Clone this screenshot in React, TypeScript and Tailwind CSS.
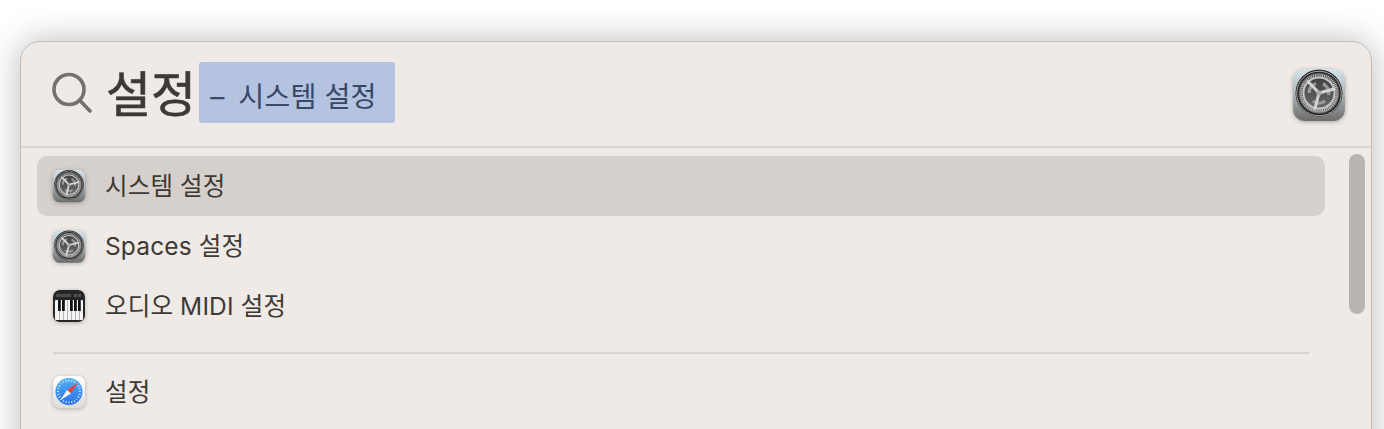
const FONT = 'font-["Inter","Noto_Sans_CJK_KR",sans-serif]'

function GearIcon({ size, className = '' }: { size: number; className?: string }) {
  const ticks = Array.from({ length: 60 }, (_, i) => i * 6)
  return (
    <svg width={size} height={size} viewBox="0 0 54 54" className={className}>
      <defs>
        <linearGradient id={`gear-bg-${size}`} x1="0" y1="0" x2="0" y2="1">
          <stop offset="0" stopColor="#d6e5eb" />
          <stop offset="0.5" stopColor="#aab2b5" />
          <stop offset="1" stopColor="#6c6c6c" />
        </linearGradient>
        <linearGradient id={`gear-in-${size}`} x1="0" y1="0" x2="0" y2="1">
          <stop offset="0" stopColor="#3a3a3a" />
          <stop offset="1" stopColor="#707070" />
        </linearGradient>
      </defs>
      <rect x="1" y="1" width="52" height="52" rx="12" fill={`url(#gear-bg-${size})`} />
      <circle cx="27" cy="25" r="23.5" fill="#262626" />
      <circle cx="27" cy="25.5" r="22.3" fill="none" stroke="#b5b5b5" strokeWidth="0.9" />
      <circle cx="27" cy="25" r="20.5" fill={`url(#gear-in-${size})`} />
      {ticks.map((a) => (
        <line key={a} x1="27" y1="5.5" x2="27" y2="8.5" stroke="#c4c4c4" strokeWidth="1" transform={`rotate(${a} 27 25)`} />
      ))}
      <circle cx="27" cy="25" r="15.5" fill="none" stroke="#c6c6c6" strokeWidth="1.9" />
      <path d="M17 25 A10 10 0 0 1 24 15.5" fill="none" stroke="#9a9a9a" strokeWidth="3.4" />
      <path d="M31 15.8 A10 10 0 0 1 36.5 27" fill="none" stroke="#9a9a9a" strokeWidth="3.4" />
      <path d="M33 33 A10 10 0 0 1 21 33" fill="none" stroke="#9a9a9a" strokeWidth="3.4" />
      <g stroke="#d4d4d4" strokeWidth="2.9" strokeLinecap="round" fill="none">
        <path d="M27 25 L16 13.5" />
        <path d="M27 25 L42 21" />
        <path d="M27 25 L23 40.5" />
      </g>
      <circle cx="27" cy="25" r="2.6" fill="#a8a8a8" />
    </svg>
  )
}

function PianoIcon() {
  return (
    <svg width="34" height="34" viewBox="0 0 34 34">
      <rect x="1" y="1" width="32" height="32" rx="7" fill="#262626" />
      <rect x="4" y="5" width="15" height="3" fill="#4a4a4a" />
      <rect x="22" y="5" width="3" height="3" fill="#555" />
      <rect x="26" y="5" width="3" height="3" fill="#555" />
      <rect x="3" y="11" width="28" height="20" rx="1" fill="#f4f4f4" />
      {[7.5, 11.5, 15.5, 19.5, 23.5, 27.5].map((x) => (
        <line key={x} x1={x} y1="11" x2={x} y2="31" stroke="#9a9a9a" strokeWidth="0.7" />
      ))}
      {[6, 10, 18, 22, 26].map((x) => (
        <rect key={x} x={x} y="11" width="2.8" height="11" fill="#111" />
      ))}
    </svg>
  )
}

function SafariIcon() {
  const ticks = Array.from({ length: 24 }, (_, i) => i * 15)
  return (
    <svg width="34" height="34" viewBox="0 0 34 34">
      <defs>
        <linearGradient id="safari-bg" x1="0" y1="0" x2="0" y2="1">
          <stop offset="0" stopColor="#ffffff" />
          <stop offset="1" stopColor="#dcdcdc" />
        </linearGradient>
        <linearGradient id="safari-face" x1="0" y1="0" x2="0" y2="1">
          <stop offset="0" stopColor="#4fb2f5" />
          <stop offset="1" stopColor="#2a6fe6" />
        </linearGradient>
      </defs>
      <rect x="1" y="1" width="32" height="32" rx="7" fill="url(#safari-bg)" />
      <circle cx="17" cy="16.5" r="13.5" fill="url(#safari-face)" />
      {ticks.map((a) => (
        <line key={a} x1="17" y1="4.5" x2="17" y2="6.5" stroke="#e6f2fd" strokeWidth="0.9" transform={`rotate(${a} 17 16.5)`} />
      ))}
      <polygon points="26,7.5 15,15 19,18.5" fill="#e8433a" />
      <polygon points="8,25.5 15,15 19,18.5" fill="#f5f5f5" />
    </svg>
  )
}

const rows = [
  { label: '시스템 설정', icon: <GearIcon size={34} />, selected: true },
  { label: 'Spaces 설정', icon: <GearIcon size={35} /> },
  { label: '오디오 MIDI 설정', icon: <PianoIcon /> },
]

function Row({ label, icon, selected }: { label: string; icon: React.ReactNode; selected?: boolean }) {
  return (
    <div className={`flex h-[60px] items-center gap-[19px] rounded-[10px] pl-[15px] ${selected ? 'bg-[#d5d0cc]' : ''}`}>
      <div className="flex w-[34px] shrink-0 justify-center drop-shadow-[0_1px_2px_rgba(0,0,0,0.25)]">{icon}</div>
      <span className="pt-[1px] text-[24.5px] leading-none tracking-[0.15px] text-[#3d3935]">{label}</span>
    </div>
  )
}

export default function App() {
  return (
    <div className={`h-[429px] overflow-hidden bg-white pt-[41px] pl-[20px] pr-[12px] ${FONT}`}>
      <div className="h-[420px] rounded-t-[20px] border border-[#c3bfbc] bg-[#efeae6] shadow-[0_0_34px_rgba(0,0,0,0.28)]">
        <div className="flex h-[106px] items-center border-b-2 border-[#d9d4d0] pl-[30px] pr-[25px]">
          <svg width="42" height="42" viewBox="0 0 42 42" fill="none" stroke="#75706b" strokeWidth="3.6" strokeLinecap="round" className="mb-[2px] shrink-0">
            <circle cx="18" cy="17.5" r="15" />
            <line x1="29" y1="28.5" x2="39" y2="39" />
          </svg>
          <span className="ml-[13px] text-[49px] leading-none font-normal text-[#3d3935] [-webkit-text-stroke:0.6px_#3d3935]">설정</span>
          <div className="mb-[4px] ml-[3px] flex h-[61px] w-[196px] items-center rounded-[3px] bg-[#b3c3e0] pt-[11px] pl-[11px] text-[28.3px] leading-none text-[#3a4868]">
            <span className="mr-[14px]">–</span>
            <span>시스템 설정</span>
          </div>
          <GearIcon size={54} className="mt-[2px] ml-auto drop-shadow-[0_1px_2px_rgba(0,0,0,0.3)]" />
        </div>
        <div className="flex">
          <div className="box-content w-[1288px] pt-[8px] pl-[16px]">
            {rows.map((r) => (
              <Row key={r.label} {...r} />
            ))}
            <div className="mt-[16px] mb-[8px] ml-[16px] h-[2px] w-[1256px] bg-[#d9d4d0]" />
            <Row label="설정" icon={<SafariIcon />} />
          </div>
          <div className="mt-[6px] ml-[24px] h-[160px] w-[16px] rounded-full bg-[#bab5b1]" />
        </div>
      </div>
    </div>
  )
}
